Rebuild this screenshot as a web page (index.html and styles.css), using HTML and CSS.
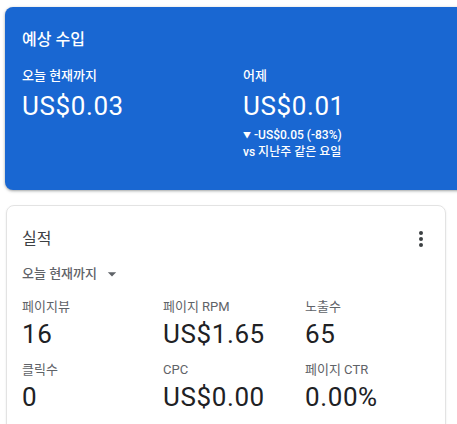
FILE: index.html
```html
<!DOCTYPE html>
<html lang="ko">
<head>
    <meta charset="UTF-8">
    <meta name="viewport" content="width=device-width, initial-scale=1.0">
    <title>수입</title>
    <link rel="stylesheet" href="styles.css">
</head>
<body>
    <!-- 예상 수입 카드 -->
    <section class="tarjeta-azul">
        <div class="titulo-azul">예상 수입</div>
        <div class="fila-azul">
            <div class="col-azul">
                <div class="etiqueta-azul">오늘 현재까지</div>
                <div class="valor-azul">US$0.03</div>
            </div>
            <div class="col-azul">
                <div class="etiqueta-azul">어제</div>
                <div class="valor-azul">US$0.01</div>
                <div class="delta"><span class="triangulo">▼</span> -US$0.05 (-83%)</div>
                <div class="delta">vs 지난주 같은 요일</div>
            </div>
        </div>
    </section>

    <!-- 실적 카드 -->
    <section class="tarjeta">
        <div class="tarjeta-header">
            <div class="titulo">실적</div>
            <svg class="icono-menu" width="24" height="24" viewBox="0 0 24 24">
                <circle cx="12" cy="6" r="2"/>
                <circle cx="12" cy="12" r="2"/>
                <circle cx="12" cy="18" r="2"/>
            </svg>
        </div>
        <div class="selector">
            <span>오늘 현재까지</span>
            <svg class="icono-flecha" width="20" height="20" viewBox="0 0 24 24">
                <path d="M7 10l5 5 5-5z"/>
            </svg>
        </div>
        <div class="metricas">
            <div class="metrica">
                <div class="etiqueta">페이지뷰</div>
                <div class="valor">16</div>
            </div>
            <div class="metrica">
                <div class="etiqueta">페이지 RPM</div>
                <div class="valor">US$1.65</div>
            </div>
            <div class="metrica">
                <div class="etiqueta">노출수</div>
                <div class="valor">65</div>
            </div>
            <div class="metrica">
                <div class="etiqueta">클릭수</div>
                <div class="valor">0</div>
            </div>
            <div class="metrica">
                <div class="etiqueta">CPC</div>
                <div class="valor">US$0.00</div>
            </div>
            <div class="metrica">
                <div class="etiqueta">페이지 CTR</div>
                <div class="valor">0.00%</div>
            </div>
        </div>
    </section>
</body>
</html>
```

FILE: styles.css
```css
body {
    margin: 0;
    padding: 7px 0 0 0;
    background: #fff;
    overflow: hidden;
    font-family: Roboto, 'Noto Sans CJK KR', sans-serif;
}

/* Tarjeta azul */
.tarjeta-azul {
    background: #1967d2;
    color: #fff;
    margin: 0 -20px 0 5px;
    height: 183px;
    box-sizing: border-box;
    padding: 21px 17px;
    border-radius: 8px;
    box-shadow: 0 1px 2px rgba(60,64,67,0.3), 0 1px 3px 1px rgba(60,64,67,0.15);
}

.titulo-azul {
    font-size: 16px;
    line-height: 24px;
    font-weight: 500;
}

.fila-azul {
    display: grid;
    grid-template-columns: 221px 1fr;
    margin-top: 14px;
}

.etiqueta-azul {
    font-size: 13px;
    line-height: 20px;
    font-weight: 500;
}

.valor-azul {
    font-size: 26px;
    line-height: 32px;
    letter-spacing: 0.6px;
    margin-top: 4px;
}

.valor-azul + .delta {
    margin-top: 5px;
}

.delta {
    font-size: 12px;
    line-height: 16px;
    font-weight: 500;
}

.triangulo {
    font-size: 8px;
    vertical-align: 1px;
}

/* Tarjeta de rendimiento */
.tarjeta {
    margin: 15px 11px 0 6px;
    height: 260px;
    border: 1px solid #e3e3e3;
    border-radius: 8px;
    padding: 21px 12px 0 15px;
    box-shadow: 0 1px 2px rgba(60,64,67,0.12);
}

.tarjeta-header {
    display: flex;
    justify-content: space-between;
    align-items: flex-start;
}

.titulo {
    font-size: 16px;
    line-height: 24px;
    color: #3c4043;
}

.icono-menu {
    fill: #3c4043;
}

.selector {
    display: flex;
    align-items: center;
    margin-top: 13px;
    font-size: 13px;
    line-height: 20px;
    font-weight: 500;
    color: #5f6368;
}

.icono-flecha {
    fill: #5f6368;
    margin-left: 5px;
}

.metricas {
    display: grid;
    grid-template-columns: 141px 142px 1fr;
    row-gap: 10px;
    margin-top: 13px;
}

.etiqueta {
    font-size: 13px;
    line-height: 20px;
    color: #5f6368;
}

.valor {
    font-size: 26px;
    line-height: 32px;
    letter-spacing: 0.6px;
    color: #202124;
    margin-top: 1px;
}
```
